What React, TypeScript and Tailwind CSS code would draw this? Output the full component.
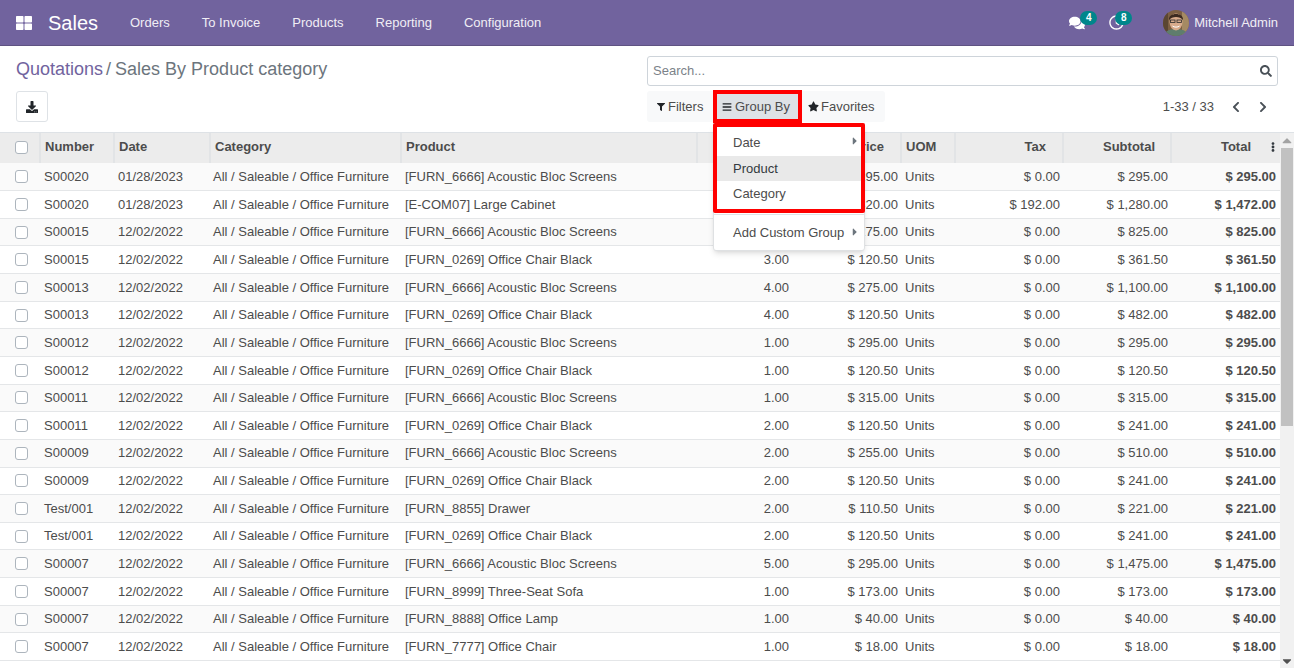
import { FaThLarge, FaComments, FaRegClock, FaFilter, FaBars, FaStar, FaSearch, FaChevronLeft, FaChevronRight, FaEllipsisV, FaDownload, FaCaretRight, FaCaretUp, FaCaretDown } from "react-icons/fa";

const furn = "All / Saleable / Office Furniture";
const acoustic = "[FURN_6666] Acoustic Bloc Screens";
const chair = "[FURN_0269] Office Chair Black";

const rows = [
  ["S00020", "01/28/2023", acoustic, "1.00", "$ 295.00", "$ 0.00", "$ 295.00", "$ 295.00"],
  ["S00020", "01/28/2023", "[E-COM07] Large Cabinet", "4.00", "$ 320.00", "$ 192.00", "$ 1,280.00", "$ 1,472.00"],
  ["S00015", "12/02/2022", acoustic, "3.00", "$ 275.00", "$ 0.00", "$ 825.00", "$ 825.00"],
  ["S00015", "12/02/2022", chair, "3.00", "$ 120.50", "$ 0.00", "$ 361.50", "$ 361.50"],
  ["S00013", "12/02/2022", acoustic, "4.00", "$ 275.00", "$ 0.00", "$ 1,100.00", "$ 1,100.00"],
  ["S00013", "12/02/2022", chair, "4.00", "$ 120.50", "$ 0.00", "$ 482.00", "$ 482.00"],
  ["S00012", "12/02/2022", acoustic, "1.00", "$ 295.00", "$ 0.00", "$ 295.00", "$ 295.00"],
  ["S00012", "12/02/2022", chair, "1.00", "$ 120.50", "$ 0.00", "$ 120.50", "$ 120.50"],
  ["S00011", "12/02/2022", acoustic, "1.00", "$ 315.00", "$ 0.00", "$ 315.00", "$ 315.00"],
  ["S00011", "12/02/2022", chair, "2.00", "$ 120.50", "$ 0.00", "$ 241.00", "$ 241.00"],
  ["S00009", "12/02/2022", acoustic, "2.00", "$ 255.00", "$ 0.00", "$ 510.00", "$ 510.00"],
  ["S00009", "12/02/2022", chair, "2.00", "$ 120.50", "$ 0.00", "$ 241.00", "$ 241.00"],
  ["Test/001", "12/02/2022", "[FURN_8855] Drawer", "2.00", "$ 110.50", "$ 0.00", "$ 221.00", "$ 221.00"],
  ["Test/001", "12/02/2022", chair, "2.00", "$ 120.50", "$ 0.00", "$ 241.00", "$ 241.00"],
  ["S00007", "12/02/2022", acoustic, "5.00", "$ 295.00", "$ 0.00", "$ 1,475.00", "$ 1,475.00"],
  ["S00007", "12/02/2022", "[FURN_8999] Three-Seat Sofa", "1.00", "$ 173.00", "$ 0.00", "$ 173.00", "$ 173.00"],
  ["S00007", "12/02/2022", "[FURN_8888] Office Lamp", "1.00", "$ 40.00", "$ 0.00", "$ 40.00", "$ 40.00"],
  ["S00007", "12/02/2022", "[FURN_7777] Office Chair", "1.00", "$ 18.00", "$ 0.00", "$ 18.00", "$ 18.00"],
];

const navItems = ["Orders", "To Invoice", "Products", "Reporting", "Configuration"];

const Check = () => (
  <span className="block w-[13px] h-[13px] ml-[15px] rounded-[3px] border border-[#adb5bd] bg-white" />
);

const Badge = ({ n, left }: { n: string; left: string }) => (
  <span className={`absolute -top-[4px] ${left} w-[17px] h-[14px] rounded-full bg-[#00868b] text-white text-[10px] font-bold leading-[14px] text-center`}>
    {n}
  </span>
);

const Avatar = () => (
  <svg width="26" height="26" viewBox="0 0 26 26" className="rounded-full">
    <rect width="26" height="26" fill="#7c5f43" />
    <rect x="19" width="7" height="26" fill="#a58a63" />
    <rect width="5" height="26" fill="#5b4632" />
    <path d="M0 26 C2 20 8 19 13 19 C18 19 24 20 26 26Z" fill="#5f7d6d" />
    <ellipse cx="13" cy="12" rx="6.5" ry="8.5" fill="#d8ab8c" />
    <path d="M6 10 C5 2 21 2 20 10 C17 6 9 6 6 10Z" fill="#3b2a20" />
    <rect x="7.5" y="10" width="4.5" height="2.5" fill="none" stroke="#2b2b2b" strokeWidth="0.8" />
    <rect x="14" y="10" width="4.5" height="2.5" fill="none" stroke="#2b2b2b" strokeWidth="0.8" />
    <path d="M9.5 16 C11 17.5 15 17.5 16.5 16" stroke="#fff" strokeWidth="1" fill="none" />
  </svg>
);

const Th = ({ children, right, w }: { children?: React.ReactNode; right?: boolean; w: string }) => (
  <th className={`${w} ${right ? "text-right pr-[3px]" : "text-left pl-[4px]"} pb-[2px] font-bold border-l-2 border-[#e2e4e6] first:border-l-0 first:pl-0`}>
    {children}
  </th>
);

export default function App() {
  return (
    <div className="h-screen overflow-hidden bg-white flex flex-col text-[13px] text-[#4c4c4c] font-['Liberation_Sans',Arial,sans-serif]">
      <header className="h-[46px] shrink-0 bg-[#71639e] border-b border-[#5f5382] flex items-center text-white">
        <FaThLarge className="ml-[16px] text-[16px]" />
        <span className="ml-[16px] text-[20px] w-[50px]">Sales</span>
        <nav className="flex ml-[32px] gap-[32px] text-[#f0eef5]">
          {navItems.map((item) => (
            <span key={item}>{item}</span>
          ))}
        </nav>
        <div className="ml-auto flex items-center mr-[16px]">
          <span className="relative mr-[24px]">
            <FaComments className="text-[16px]" />
            <Badge n="4" left="left-[11px]" />
          </span>
          <span className="relative mr-[39px]">
            <FaRegClock className="text-[15px]" />
            <Badge n="8" left="left-[6px]" />
          </span>
          <Avatar />
          <span className="ml-[5px] text-[#f0eef5]">Mitchell Admin</span>
        </div>
      </header>

      <section className="h-[87px] shrink-0 flex pl-4 pr-4 pt-[10px] border-b border-[#dee2e6]">
        <div className="w-[631px]">
          <div className="h-[26px] text-[18px] leading-[26px]">
            <span className="text-[#71639e]">Quotations</span>
            <span className="text-[#6c757d] ml-[3px] mr-[4px]">/</span>
            <span className="text-[#6c757d]">Sales By Product category</span>
          </div>
          <button className="mt-[9px] w-8 h-[31px] rounded-[3px] border border-[#dee2e6] bg-white flex items-center justify-center text-[#212529]">
            <FaDownload className="text-[12px]" />
          </button>
        </div>
        <div className="flex-1">
          <div className="h-[30px] rounded-[3px] border border-[#ced4da] flex items-center justify-between px-[5px] text-[#7b8289]">
            <span>Search...</span>
            <FaSearch className="text-[12px] text-[#495057]" />
          </div>
          <div className="mt-[5px] flex items-center">
            <div className="flex h-[31px] rounded-[3px] bg-[#f8f9fa] text-[#4c4c4c] items-center">
              <span className="flex items-center gap-[3px] pl-[10px] w-[67px]">
                <FaFilter className="text-[8px] text-[#212529]" />
                Filters
              </span>
              <div className="relative">
                <span className="flex items-center gap-[3px] h-[31px] pl-[8px] w-[87px] bg-[#dee2e6]">
                  <FaBars className="text-[10px] text-[#212529]" />
                  Group By
                </span>
                <span className="absolute -left-[1px] -top-[1px] w-[89px] h-[33px] border-[4px] border-[#ff0000]" />
                <div className="absolute z-10 -left-[1px] top-[32px] w-[152px] h-[128px] bg-white rounded-b-[3px] border border-[#dfe1e3] shadow-md pt-[6px]">
                  <div className="h-[26px] pl-[19px] leading-[26px] relative">
                    Date
                    <FaCaretRight className="absolute right-[3px] top-[5px] text-[12px] text-[#6c757d]" />
                  </div>
                  <div className="h-[25px] pl-[19px] leading-[26px] bg-[#e9e9e9] text-[#343a40]">Product</div>
                  <div className="h-[25px] pl-[19px] leading-[26px]">Category</div>
                  <div className="h-px bg-[#dee2e6] mt-[8px] mb-[5px]" />
                  <div className="h-[25px] pl-[19px] leading-[26px] relative">
                    Add Custom Group
                    <FaCaretRight className="absolute right-[3px] top-[6px] text-[12px] text-[#6c757d]" />
                  </div>
                  <span className="absolute -left-[1px] -top-[1px] w-[152px] h-[90px] border-[4px] border-[#ff0000] rounded-[2px]" />
                </div>
              </div>
              <span className="flex items-center gap-[2px] pl-[7px] w-[84px]">
                <FaStar className="text-[11px] text-[#212529]" />
                Favorites
              </span>
            </div>
            <span className="ml-auto text-[#4c4c4c]">1-33 / 33</span>
            <FaChevronLeft className="ml-[16px] text-[12px] text-[#495057]" />
            <FaChevronRight className="ml-[15px] mr-[9px] text-[12px] text-[#495057]" />
          </div>
        </div>
      </section>

      <div className="flex-1 flex min-h-0">
        <div className="w-[1280px] overflow-hidden">
          <table className="w-[1280px] table-fixed border-collapse">
            <thead>
              <tr className="h-[30px] bg-[#ececec] text-[#4c4c4c]">
                <Th w="w-[40px]"><Check /></Th>
                <Th w="w-[74px]">Number</Th>
                <Th w="w-[96px]">Date</Th>
                <Th w="w-[191px]">Category</Th>
                <Th w="w-[296px]">Product</Th>
                <Th w="w-[95px]" right>Qty</Th>
                <Th w="w-[109px]" right><span className="mr-[13px]">Price</span></Th>
                <Th w="w-[54px]">UOM</Th>
                <Th w="w-[108px]" right><span className="mr-[13px]">Tax</span></Th>
                <Th w="w-[108px]" right><span className="mr-[12px]">Subtotal</span></Th>
                <Th w="w-[109px]" right>
                  <span className="inline-flex items-center -mr-[1px]">
                    Total
                    <FaEllipsisV className="ml-[17px] text-[10px] text-[#343a40]" />
                  </span>
                </Th>
              </tr>
            </thead>
            <tbody>
              {rows.map((r, i) => (
                <tr key={i} className={`h-[27.65px] border-b border-[#e4e6e8] ${i % 2 === 0 ? "bg-[#fafafa]" : "bg-white"}`}>
                  <td><Check /></td>
                  <td className="pl-[4px]">{r[0]}</td>
                  <td className="pl-[4px]">{r[1]}</td>
                  <td className="pl-[3px] whitespace-nowrap">{furn}</td>
                  <td className="pl-[4px] whitespace-nowrap">{r[2]}</td>
                  <td className="pr-[3px] text-right">{r[3]}</td>
                  <td className="pr-[3px] text-right">{r[4]}</td>
                  <td className="pl-[4px]">Units</td>
                  <td className="pr-[3px] text-right">{r[5]}</td>
                  <td className="pr-[3px] text-right">{r[6]}</td>
                  <td className="pr-[4px] text-right font-bold">{r[7]}</td>
                </tr>
              ))}
            </tbody>
          </table>
        </div>
        <div className="w-[14px] bg-[#f1f1f1] flex flex-col items-center">
          <FaCaretUp className="h-[15px] text-[10px] text-[#a3a3a3]" />
          <div className="w-[12px] h-[278px] bg-[#c1c1c1]" />
          <FaCaretDown className="mt-auto h-[14px] text-[10px] text-[#505050]" />
        </div>
      </div>
    </div>
  );
}
